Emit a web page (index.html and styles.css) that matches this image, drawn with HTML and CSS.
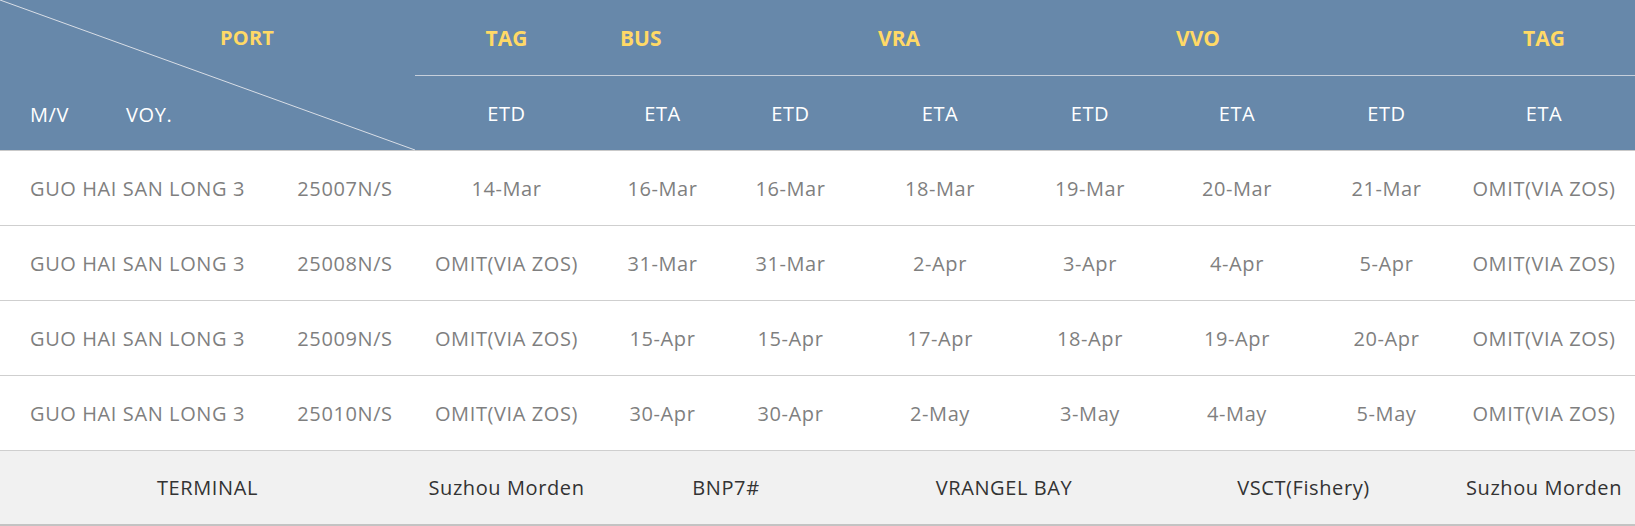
FILE: index.html
```html
<!DOCTYPE html>
<html lang="en">
<head>
<meta charset="utf-8">
<title>Schedule</title>
<link rel="stylesheet" href="styles.css">
</head>
<body>
<div class="sched">
  <div class="diag">
    <svg class="diag-line" viewBox="0 0 415 151" preserveAspectRatio="none"><line x1="0" y1="0" x2="415" y2="150" stroke="#d9dee6" stroke-width="1"/></svg>
    <div class="diag-port">PORT</div>
    <div class="diag-bottom"><span class="mv">M/V</span><span>VOY.</span></div>
  </div>
  <div class="h1 c">TAG</div>
  <div class="h1 span2 l">BUS</div>
  <div class="h1 span2 l l2">VRA</div>
  <div class="h1 span2 l">VVO</div>
  <div class="h1 c">TAG</div>

  <div class="h2">ETD</div>
  <div class="h2">ETA</div>
  <div class="h2">ETD</div>
  <div class="h2">ETA</div>
  <div class="h2">ETD</div>
  <div class="h2">ETA</div>
  <div class="h2">ETD</div>
  <div class="h2">ETA</div>

  <div class="d first">GUO HAI SAN LONG 3</div><div class="d">25007N/S</div><div class="d">14-Mar</div><div class="d">16-Mar</div><div class="d">16-Mar</div><div class="d">18-Mar</div><div class="d">19-Mar</div><div class="d">20-Mar</div><div class="d">21-Mar</div><div class="d">OMIT(VIA ZOS)</div>

  <div class="d first">GUO HAI SAN LONG 3</div><div class="d">25008N/S</div><div class="d">OMIT(VIA ZOS)</div><div class="d">31-Mar</div><div class="d">31-Mar</div><div class="d">2-Apr</div><div class="d">3-Apr</div><div class="d">4-Apr</div><div class="d">5-Apr</div><div class="d">OMIT(VIA ZOS)</div>

  <div class="d first">GUO HAI SAN LONG 3</div><div class="d">25009N/S</div><div class="d">OMIT(VIA ZOS)</div><div class="d">15-Apr</div><div class="d">15-Apr</div><div class="d">17-Apr</div><div class="d">18-Apr</div><div class="d">19-Apr</div><div class="d">20-Apr</div><div class="d">OMIT(VIA ZOS)</div>

  <div class="d first">GUO HAI SAN LONG 3</div><div class="d">25010N/S</div><div class="d">OMIT(VIA ZOS)</div><div class="d">30-Apr</div><div class="d">30-Apr</div><div class="d">2-May</div><div class="d">3-May</div><div class="d">4-May</div><div class="d">5-May</div><div class="d">OMIT(VIA ZOS)</div>

  <div class="t span2">TERMINAL</div>
  <div class="t">Suzhou Morden</div>
  <div class="t span2">BNP7#</div>
  <div class="t span2">VRANGEL BAY</div>
  <div class="t span2">VSCT(Fishery)</div>
  <div class="t">Suzhou Morden</div>
</div>
</body>
</html>
```
FILE: styles.css
```css
html, body {
  margin: 0;
  padding: 0;
  background: #ffffff;
}

.sched {
  display: grid;
  grid-template-columns: 275px 140px 183px 129px 127px 172px 128px 166px 133px 182px;
  grid-template-rows: 76px 75px 75px 75px 75px 75px 75px;
  width: 1635px;
  font-family: "Open Sans", "Noto Sans", sans-serif;
  font-size: 20px;
  letter-spacing: 0.6px;
}

.sched > div {
  box-sizing: border-box;
  display: flex;
  align-items: center;
  justify-content: center;
  white-space: nowrap;
}

.diag {
  grid-column: 1 / 3;
  grid-row: 1 / 3;
  position: relative;
  background: #6788aa;
  border-bottom: 1px solid #c9c9c9;
  flex-direction: column;
  align-items: stretch !important;
  justify-content: flex-start !important;
}

.diag-line {
  position: absolute;
  left: 0;
  top: 0;
  width: 415px;
  height: 151px;
}

.diag-port {
  height: 75px;
  display: flex;
  align-items: center;
  padding-left: 220px;
  color: #ffd966;
  font-weight: 700;
  font-size: 20px;
  letter-spacing: 0.2px;
}

.diag-bottom {
  height: 75px;
  display: flex;
  align-items: center;
  padding-left: 30px;
  padding-top: 3px;
  box-sizing: border-box;
  color: #ffffff;
}

.mv {
  width: 96px;
}

.h1 {
  background: #6788aa;
  color: #ffd966;
  font-weight: 700;
  font-size: 21px;
  letter-spacing: 0;
  border-bottom: 1px solid #c6cfdb;
}

.h1.l {
  justify-content: flex-start !important;
  padding-left: 22px;
}

.h1.l2 {
  padding-left: 24px;
}

.h2 {
  background: #6788aa;
  color: #ffffff;
  border-bottom: 1px solid #c9c9c9;
}

.span2 {
  grid-column: span 2;
}

.d {
  color: #7f7f7f;
  border-bottom: 1px solid #cfcfcf;
}

.d.first {
  justify-content: flex-start !important;
  padding-left: 30px;
}

.t {
  background: #f1f1f1;
  color: #333333;
  border-bottom: 2px solid #c3c3c3;
}
```
